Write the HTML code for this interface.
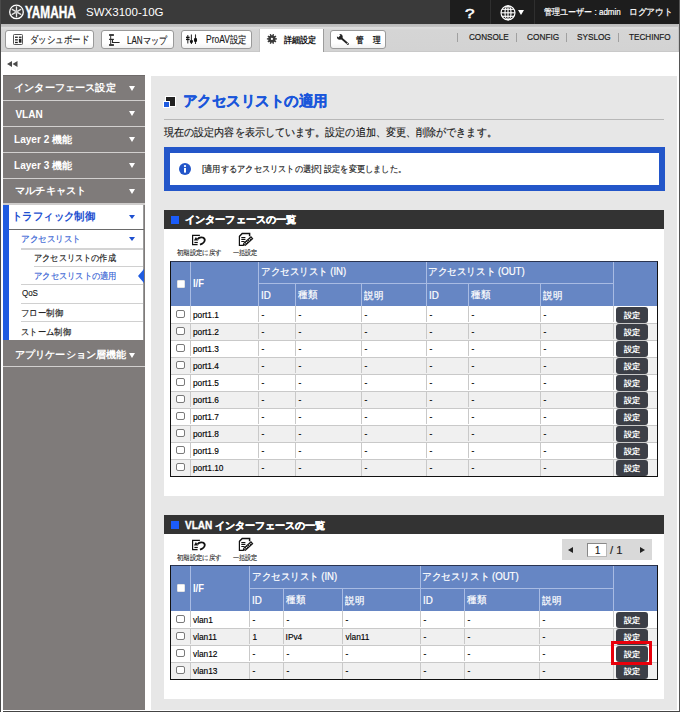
<!DOCTYPE html><html lang="ja"><head><meta charset="utf-8"><style>
*{margin:0;padding:0;box-sizing:border-box}
html,body{width:680px;height:712px;overflow:hidden;background:#fff;font-family:"Liberation Sans",sans-serif;color:#222}
.a{position:absolute}
.t{position:absolute;white-space:nowrap;line-height:1;transform-origin:0 0}
.tb{border:1px solid #9a9a9a;border-radius:3px;background:linear-gradient(#fff,#fff 70%,#f2f2f2)}
.sep{background:#d2d0cf}
.tri{width:0;height:0;border-left:3.2px solid transparent;border-right:3.2px solid transparent;border-top:5px solid #fff}
.btn{background:#3c3f47;border-radius:3px}
.cb{border:1px solid #7a7a7a;border-radius:2px;background:#fff}
</style></head><body><div class="a " style="left:0px;top:0px;width:680px;height:24px;background:#3a3a3a"></div>
<div class="a " style="left:450px;top:0px;width:230px;height:24px;background:#1d1d1d"></div>
<div class="a " style="left:490px;top:0px;width:1px;height:24px;background:#2f2f2f"></div>
<div class="a " style="left:534px;top:0px;width:1px;height:24px;background:#2f2f2f"></div>
<svg class="a" style="left:8px;top:4px" width="17" height="16" viewBox="0 0 17 16">
<circle cx="8.5" cy="7.9" r="6.8" fill="none" stroke="#fff" stroke-width="1.3"/>
<g stroke="#e6e6e6" stroke-width="1.3" stroke-linecap="round">
<line x1="8.5" y1="2.8" x2="8.5" y2="12.8"/>
<line x1="4.2" y1="5.4" x2="12.8" y2="10.4"/>
<line x1="12.8" y1="5.4" x2="4.2" y2="10.4"/>
</g><circle cx="8.5" cy="7.9" r="1.6" fill="#d0d0d0"/></svg>
<svg class="a" style="left:500px;top:5px" width="16" height="16" viewBox="0 0 16 16">
<g fill="none" stroke="#fff" stroke-width="1.15">
<circle cx="8" cy="7.8" r="7"/>
<ellipse cx="8" cy="7.8" rx="3" ry="7"/>
<line x1="8" y1="0.8" x2="8" y2="14.8"/>
<line x1="1" y1="7.8" x2="15" y2="7.8"/>
<line x1="2" y1="4.3" x2="14" y2="4.3"/>
<line x1="2" y1="11.3" x2="14" y2="11.3"/>
</g></svg>
<div class="a " style="left:518px;top:10px;width:0px;height:0px;border-left:3.3px solid transparent;border-right:3.3px solid transparent;border-top:5.3px solid #fff"></div>
<div class="a " style="left:0px;top:24px;width:680px;height:28px;background:linear-gradient(#b9b9b9 0px,#c6c6c6 3px,#dddddd 3px,#dcdcdc 4px,#d5d5d5 6px,#d3d3d3 27px,#c9c9c9 27px)"></div>
<div class="a tb" style="left:5px;top:30px;width:89px;height:19px;"></div>
<div class="a tb" style="left:101px;top:30px;width:73px;height:19px;"></div>
<div class="a tb" style="left:181px;top:30px;width:71px;height:19px;"></div>
<div class="a tb" style="left:330px;top:30px;width:56px;height:19px;"></div>
<div class="a " style="left:259px;top:29px;width:65px;height:23px;background:#fff;border-left:1px solid #c4c4c4;border-right:1px solid #9c9c9c"></div>
<svg class="a" style="left:13px;top:34px" width="10" height="11" viewBox="0 0 10 11">
<rect x="0.5" y="0.5" width="9" height="10" rx="0.8" fill="none" stroke="#555" stroke-width="1"/>
<g fill="#222"><rect x="2" y="2.6" width="2.8" height="1.3"/><rect x="2" y="5.2" width="2.8" height="1.3"/><rect x="2" y="7.8" width="2.8" height="1.3"/>
<rect x="5.9" y="2.6" width="2.6" height="1.3"/><rect x="5.9" y="4.8" width="2.6" height="3.9"/></g></svg>
<svg class="a" style="left:108px;top:33px" width="13" height="14" viewBox="0 0 13 14">
<g fill="#111"><rect x="1.1" y="1.2" width="4.8" height="1.6"/><rect x="1.1" y="5.8" width="4.8" height="1.1"/><rect x="1.1" y="11.2" width="4.8" height="1.6"/></g>
<path d="M2.7 2.5 V11.5" stroke="#333" stroke-width="1"/><path d="M4.5 6.6 V9.5 H11.6" stroke="#222" stroke-width="1.1" fill="none"/></svg>
<svg class="a" style="left:185px;top:33px" width="13" height="12" viewBox="0 0 13 12">
<g stroke="#333" stroke-width="1.1"><path d="M2.8 2 V10.5"/><path d="M6.4 1.4 V11"/><path d="M10.5 1.4 V11"/></g>
<g fill="#111"><rect x="1" y="3.7" width="3.6" height="1.4"/><rect x="1" y="5.8" width="3.6" height="1.3"/>
<path d="M4.9 7.3 H7.9 V9.3 L6.4 10.6 L4.9 9.3Z"/><ellipse cx="10.5" cy="7" rx="1.6" ry="2.3"/></g></svg>
<svg class="a" style="left:266px;top:33px" width="12" height="12" viewBox="0 0 12 12">
<g stroke="#3a3a3a" stroke-width="1.4"><line x1="5.9" y1="5.9" x2="10.90" y2="5.90"/><line x1="5.9" y1="5.9" x2="9.95" y2="8.84"/><line x1="5.9" y1="5.9" x2="7.45" y2="10.66"/><line x1="5.9" y1="5.9" x2="4.35" y2="10.66"/><line x1="5.9" y1="5.9" x2="1.85" y2="8.84"/><line x1="5.9" y1="5.9" x2="0.90" y2="5.90"/><line x1="5.9" y1="5.9" x2="1.85" y2="2.96"/><line x1="5.9" y1="5.9" x2="4.35" y2="1.14"/><line x1="5.9" y1="5.9" x2="7.45" y2="1.14"/><line x1="5.9" y1="5.9" x2="9.95" y2="2.96"/></g>
<circle cx="5.9" cy="5.9" r="3.6" fill="#3a3a3a"/><circle cx="5.9" cy="5.9" r="1.1" fill="#fff"/></svg>
<svg class="a" style="left:335px;top:32px" width="15" height="14" viewBox="0 0 15 14">
<line x1="5" y1="5" x2="13" y2="12" stroke="#222" stroke-width="1.8" stroke-linecap="round"/>
<circle cx="4.8" cy="4.8" r="2.9" fill="#222"/>
<path d="M1.2 3.5 L3.5 1.2 L5.4 3.3 L3.3 5.4Z" fill="#fff"/>
<circle cx="12.3" cy="11.3" r="0.6" fill="#fff"/></svg>
<div class="a " style="left:457px;top:33px;width:1px;height:9px;background:#a0a0a0"></div>
<div class="a " style="left:516px;top:33px;width:1px;height:9px;background:#a0a0a0"></div>
<div class="a " style="left:566px;top:33px;width:1px;height:9px;background:#a0a0a0"></div>
<div class="a " style="left:618px;top:33px;width:1px;height:9px;background:#a0a0a0"></div>
<svg class="a" style="left:7px;top:61px" width="11" height="6" viewBox="0 0 11 6">
<path d="M0 3 L5 0 L5 6Z M5.5 3 L10.5 0 L10.5 6Z" fill="#4a4a4a"/></svg>
<div class="a " style="left:3px;top:76px;width:142px;height:636px;background:#7f7b7a"></div>
<div class="a " style="left:3px;top:75px;width:142px;height:1px;background:#6e6a69"></div>
<div class="a tri" style="left:129px;top:86.3px;width:0px;height:0px;"></div>
<div class="a sep" style="left:3px;top:100px;width:142px;height:1px;"></div>
<div class="a tri" style="left:129px;top:111.3px;width:0px;height:0px;"></div>
<div class="a sep" style="left:3px;top:126px;width:142px;height:1px;"></div>
<div class="a tri" style="left:129px;top:137.3px;width:0px;height:0px;"></div>
<div class="a sep" style="left:3px;top:152px;width:142px;height:1px;"></div>
<div class="a tri" style="left:129px;top:163.3px;width:0px;height:0px;"></div>
<div class="a sep" style="left:3px;top:178px;width:142px;height:1px;"></div>
<div class="a tri" style="left:129px;top:189.3px;width:0px;height:0px;"></div>
<div class="a " style="left:3px;top:203px;width:142px;height:2px;background:#cfcdcc"></div>
<div class="a " style="left:3px;top:205px;width:141px;height:135px;background:#fff;border-right:1px solid #9a9a9a"></div>
<div class="a " style="left:3px;top:205px;width:6px;height:135px;background:#1f5be0"></div>
<div class="a " style="left:129px;top:215.2px;width:0px;height:0px;border-left:3.3px solid transparent;border-right:3.3px solid transparent;border-top:4.8px solid #1d4fd0"></div>
<div class="a " style="left:9px;top:229px;width:135px;height:1px;background:#6a6a6a"></div>
<div class="a " style="left:129px;top:237.3px;width:0px;height:0px;border-left:3.3px solid transparent;border-right:3.3px solid transparent;border-top:4.8px solid #1d4fd0"></div>
<div class="a " style="left:21px;top:248px;width:122px;height:2px;background:#d4d4d4"></div>
<div class="a " style="left:34px;top:266px;width:109px;height:1px;background:#d0d0d0"></div>
<div class="a " style="left:138px;top:269px;width:0px;height:0px;border-top:7.2px solid transparent;border-bottom:7.2px solid transparent;border-right:6.5px solid #1f5be0"></div>
<div class="a " style="left:21px;top:284px;width:122px;height:1px;background:#d0d0d0"></div>
<div class="a " style="left:21px;top:303px;width:122px;height:1px;background:#d0d0d0"></div>
<div class="a " style="left:21px;top:321px;width:122px;height:1px;background:#d0d0d0"></div>
<div class="a tri" style="left:129px;top:353px;width:0px;height:0px;"></div>
<div class="a sep" style="left:3px;top:366px;width:142px;height:1px;"></div>
<div class="a " style="left:151px;top:76px;width:526px;height:634px;background:#e7e7e7"></div>
<div class="a " style="left:166px;top:97px;width:8.5px;height:9px;background:#222;box-shadow:0 0 0 1px #fff"></div>
<div class="a " style="left:163px;top:101px;width:7px;height:7px;background:#1f5be0;border:1px solid #fff"></div>
<div class="a " style="left:164px;top:119px;width:500px;height:1px;background:#b8b8b8"></div>
<div class="a " style="left:164px;top:147px;width:501px;height:44px;background:#fff;border:6px solid #2356c9"></div>
<svg class="a" style="left:179px;top:163px" width="12" height="12" viewBox="0 0 12 12">
<circle cx="6" cy="6" r="6" fill="#2356c9"/><rect x="5" y="5" width="2" height="4.6" fill="#fff"/><circle cx="6" cy="3.1" r="1.15" fill="#fff"/></svg>
<div class="a " style="left:164px;top:210px;width:500px;height:286px;background:#fff"></div>
<div class="a " style="left:164px;top:210px;width:500px;height:19px;background:#333"></div>
<div class="a " style="left:170.5px;top:216px;width:8px;height:8px;background:#1b5cfa"></div>
<svg class="a" style="left:192px;top:234px" width="14" height="12" viewBox="0 0 14 12">
<path d="M7.9 1.3 H0.6 V10.6 H5.6" stroke="#111" stroke-width="1.2" fill="none"/>
<path d="M2.4 8.5 H5.8" stroke="#111" stroke-width="1.2"/>
<path d="M5.6 5.2 C7 3 11.6 2.6 12.6 5.2 C13.3 7.3 10.8 9.6 8 10.7" stroke="#111" stroke-width="1.9" fill="none"/>
<path d="M1.9 6.6 L3.9 3 L6.3 6.6Z" fill="#111"/></svg>
<svg class="a" style="left:238px;top:232px" width="16" height="15" viewBox="0 0 16 15">
<path d="M1.5 4.2 L4.2 1.5 H11.6 V4.2" stroke="#111" stroke-width="1.5" fill="none"/>
<path d="M1.4 4 V13.4 H5.6" stroke="#111" stroke-width="1.2" fill="none"/>
<path d="M3.3 5.6 H7.4 M3.3 7.5 H7.4 M3.3 9.5 H6.6" stroke="#111" stroke-width="1.2"/>
<path d="M6.2 12.6 L14.2 5.4" stroke="#111" stroke-width="3.6"/>
<path d="M6.6 12.2 L13.6 5.9" stroke="#fff" stroke-width="1.2" stroke-dasharray="1 1"/>
<path d="M4.6 13.9 L5.2 11.3 L7.3 13.3Z" fill="#111"/></svg>
<div class="a " style="left:170px;top:261px;width:488px;height:216px;border:1px solid #111;border-top-color:#2a3450;background:#fff"></div>
<div class="a " style="left:171px;top:262px;width:486px;height:44px;background:#6686c4"></div>
<div class="a " style="left:190px;top:262px;width:1px;height:44px;background:#a8bbe3"></div>
<div class="a " style="left:258px;top:262px;width:1px;height:44px;background:#a8bbe3"></div>
<div class="a " style="left:426px;top:262px;width:1px;height:44px;background:#a8bbe3"></div>
<div class="a " style="left:613px;top:262px;width:1px;height:44px;background:#a8bbe3"></div>
<div class="a " style="left:295px;top:284px;width:1px;height:22px;background:#a8bbe3"></div>
<div class="a " style="left:361px;top:284px;width:1px;height:22px;background:#a8bbe3"></div>
<div class="a " style="left:468px;top:284px;width:1px;height:22px;background:#a8bbe3"></div>
<div class="a " style="left:540px;top:284px;width:1px;height:22px;background:#a8bbe3"></div>
<div class="a " style="left:258px;top:283px;width:355px;height:1px;background:#a8bbe3"></div>
<div class="a " style="left:176.5px;top:279.5px;width:8px;height:8px;background:#fff;border:1px solid #e4e4e4;border-radius:1px"></div>
<div class="a " style="left:171px;top:306px;width:486px;height:17px;background:#fff"></div>
<div class="a " style="left:190px;top:306px;width:1px;height:16px;background:#c9c9c9"></div>
<div class="a " style="left:258px;top:306px;width:1px;height:16px;background:#c9c9c9"></div>
<div class="a " style="left:295px;top:306px;width:1px;height:16px;background:#c9c9c9"></div>
<div class="a " style="left:361px;top:306px;width:1px;height:16px;background:#c9c9c9"></div>
<div class="a " style="left:426px;top:306px;width:1px;height:16px;background:#c9c9c9"></div>
<div class="a " style="left:468px;top:306px;width:1px;height:16px;background:#c9c9c9"></div>
<div class="a " style="left:540px;top:306px;width:1px;height:16px;background:#c9c9c9"></div>
<div class="a " style="left:613px;top:306px;width:1px;height:16px;background:#c9c9c9"></div>
<div class="a cb" style="left:176px;top:309.5px;width:9px;height:8.5px;"></div>
<div class="a btn" style="left:616px;top:307px;width:31.5px;height:15.5px;"></div>
<div class="a " style="left:171px;top:323px;width:486px;height:17px;background:#f0f0f0"></div>
<div class="a " style="left:171px;top:323px;width:486px;height:1px;background:#c9c9c9"></div>
<div class="a " style="left:190px;top:323px;width:1px;height:16px;background:#c9c9c9"></div>
<div class="a " style="left:258px;top:323px;width:1px;height:16px;background:#c9c9c9"></div>
<div class="a " style="left:295px;top:323px;width:1px;height:16px;background:#c9c9c9"></div>
<div class="a " style="left:361px;top:323px;width:1px;height:16px;background:#c9c9c9"></div>
<div class="a " style="left:426px;top:323px;width:1px;height:16px;background:#c9c9c9"></div>
<div class="a " style="left:468px;top:323px;width:1px;height:16px;background:#c9c9c9"></div>
<div class="a " style="left:540px;top:323px;width:1px;height:16px;background:#c9c9c9"></div>
<div class="a " style="left:613px;top:323px;width:1px;height:16px;background:#c9c9c9"></div>
<div class="a cb" style="left:176px;top:326.5px;width:9px;height:8.5px;"></div>
<div class="a btn" style="left:616px;top:324px;width:31.5px;height:15.5px;"></div>
<div class="a " style="left:171px;top:340px;width:486px;height:17px;background:#fff"></div>
<div class="a " style="left:171px;top:340px;width:486px;height:1px;background:#c9c9c9"></div>
<div class="a " style="left:190px;top:340px;width:1px;height:16px;background:#c9c9c9"></div>
<div class="a " style="left:258px;top:340px;width:1px;height:16px;background:#c9c9c9"></div>
<div class="a " style="left:295px;top:340px;width:1px;height:16px;background:#c9c9c9"></div>
<div class="a " style="left:361px;top:340px;width:1px;height:16px;background:#c9c9c9"></div>
<div class="a " style="left:426px;top:340px;width:1px;height:16px;background:#c9c9c9"></div>
<div class="a " style="left:468px;top:340px;width:1px;height:16px;background:#c9c9c9"></div>
<div class="a " style="left:540px;top:340px;width:1px;height:16px;background:#c9c9c9"></div>
<div class="a " style="left:613px;top:340px;width:1px;height:16px;background:#c9c9c9"></div>
<div class="a cb" style="left:176px;top:343.5px;width:9px;height:8.5px;"></div>
<div class="a btn" style="left:616px;top:341px;width:31.5px;height:15.5px;"></div>
<div class="a " style="left:171px;top:357px;width:486px;height:17px;background:#f0f0f0"></div>
<div class="a " style="left:171px;top:357px;width:486px;height:1px;background:#c9c9c9"></div>
<div class="a " style="left:190px;top:357px;width:1px;height:16px;background:#c9c9c9"></div>
<div class="a " style="left:258px;top:357px;width:1px;height:16px;background:#c9c9c9"></div>
<div class="a " style="left:295px;top:357px;width:1px;height:16px;background:#c9c9c9"></div>
<div class="a " style="left:361px;top:357px;width:1px;height:16px;background:#c9c9c9"></div>
<div class="a " style="left:426px;top:357px;width:1px;height:16px;background:#c9c9c9"></div>
<div class="a " style="left:468px;top:357px;width:1px;height:16px;background:#c9c9c9"></div>
<div class="a " style="left:540px;top:357px;width:1px;height:16px;background:#c9c9c9"></div>
<div class="a " style="left:613px;top:357px;width:1px;height:16px;background:#c9c9c9"></div>
<div class="a cb" style="left:176px;top:360.5px;width:9px;height:8.5px;"></div>
<div class="a btn" style="left:616px;top:358px;width:31.5px;height:15.5px;"></div>
<div class="a " style="left:171px;top:374px;width:486px;height:17px;background:#fff"></div>
<div class="a " style="left:171px;top:374px;width:486px;height:1px;background:#c9c9c9"></div>
<div class="a " style="left:190px;top:374px;width:1px;height:16px;background:#c9c9c9"></div>
<div class="a " style="left:258px;top:374px;width:1px;height:16px;background:#c9c9c9"></div>
<div class="a " style="left:295px;top:374px;width:1px;height:16px;background:#c9c9c9"></div>
<div class="a " style="left:361px;top:374px;width:1px;height:16px;background:#c9c9c9"></div>
<div class="a " style="left:426px;top:374px;width:1px;height:16px;background:#c9c9c9"></div>
<div class="a " style="left:468px;top:374px;width:1px;height:16px;background:#c9c9c9"></div>
<div class="a " style="left:540px;top:374px;width:1px;height:16px;background:#c9c9c9"></div>
<div class="a " style="left:613px;top:374px;width:1px;height:16px;background:#c9c9c9"></div>
<div class="a cb" style="left:176px;top:377.5px;width:9px;height:8.5px;"></div>
<div class="a btn" style="left:616px;top:375px;width:31.5px;height:15.5px;"></div>
<div class="a " style="left:171px;top:391px;width:486px;height:17px;background:#f0f0f0"></div>
<div class="a " style="left:171px;top:391px;width:486px;height:1px;background:#c9c9c9"></div>
<div class="a " style="left:190px;top:391px;width:1px;height:16px;background:#c9c9c9"></div>
<div class="a " style="left:258px;top:391px;width:1px;height:16px;background:#c9c9c9"></div>
<div class="a " style="left:295px;top:391px;width:1px;height:16px;background:#c9c9c9"></div>
<div class="a " style="left:361px;top:391px;width:1px;height:16px;background:#c9c9c9"></div>
<div class="a " style="left:426px;top:391px;width:1px;height:16px;background:#c9c9c9"></div>
<div class="a " style="left:468px;top:391px;width:1px;height:16px;background:#c9c9c9"></div>
<div class="a " style="left:540px;top:391px;width:1px;height:16px;background:#c9c9c9"></div>
<div class="a " style="left:613px;top:391px;width:1px;height:16px;background:#c9c9c9"></div>
<div class="a cb" style="left:176px;top:394.5px;width:9px;height:8.5px;"></div>
<div class="a btn" style="left:616px;top:392px;width:31.5px;height:15.5px;"></div>
<div class="a " style="left:171px;top:408px;width:486px;height:17px;background:#fff"></div>
<div class="a " style="left:171px;top:408px;width:486px;height:1px;background:#c9c9c9"></div>
<div class="a " style="left:190px;top:408px;width:1px;height:16px;background:#c9c9c9"></div>
<div class="a " style="left:258px;top:408px;width:1px;height:16px;background:#c9c9c9"></div>
<div class="a " style="left:295px;top:408px;width:1px;height:16px;background:#c9c9c9"></div>
<div class="a " style="left:361px;top:408px;width:1px;height:16px;background:#c9c9c9"></div>
<div class="a " style="left:426px;top:408px;width:1px;height:16px;background:#c9c9c9"></div>
<div class="a " style="left:468px;top:408px;width:1px;height:16px;background:#c9c9c9"></div>
<div class="a " style="left:540px;top:408px;width:1px;height:16px;background:#c9c9c9"></div>
<div class="a " style="left:613px;top:408px;width:1px;height:16px;background:#c9c9c9"></div>
<div class="a cb" style="left:176px;top:411.5px;width:9px;height:8.5px;"></div>
<div class="a btn" style="left:616px;top:409px;width:31.5px;height:15.5px;"></div>
<div class="a " style="left:171px;top:425px;width:486px;height:17px;background:#f0f0f0"></div>
<div class="a " style="left:171px;top:425px;width:486px;height:1px;background:#c9c9c9"></div>
<div class="a " style="left:190px;top:425px;width:1px;height:16px;background:#c9c9c9"></div>
<div class="a " style="left:258px;top:425px;width:1px;height:16px;background:#c9c9c9"></div>
<div class="a " style="left:295px;top:425px;width:1px;height:16px;background:#c9c9c9"></div>
<div class="a " style="left:361px;top:425px;width:1px;height:16px;background:#c9c9c9"></div>
<div class="a " style="left:426px;top:425px;width:1px;height:16px;background:#c9c9c9"></div>
<div class="a " style="left:468px;top:425px;width:1px;height:16px;background:#c9c9c9"></div>
<div class="a " style="left:540px;top:425px;width:1px;height:16px;background:#c9c9c9"></div>
<div class="a " style="left:613px;top:425px;width:1px;height:16px;background:#c9c9c9"></div>
<div class="a cb" style="left:176px;top:428.5px;width:9px;height:8.5px;"></div>
<div class="a btn" style="left:616px;top:426px;width:31.5px;height:15.5px;"></div>
<div class="a " style="left:171px;top:442px;width:486px;height:17px;background:#fff"></div>
<div class="a " style="left:171px;top:442px;width:486px;height:1px;background:#c9c9c9"></div>
<div class="a " style="left:190px;top:442px;width:1px;height:16px;background:#c9c9c9"></div>
<div class="a " style="left:258px;top:442px;width:1px;height:16px;background:#c9c9c9"></div>
<div class="a " style="left:295px;top:442px;width:1px;height:16px;background:#c9c9c9"></div>
<div class="a " style="left:361px;top:442px;width:1px;height:16px;background:#c9c9c9"></div>
<div class="a " style="left:426px;top:442px;width:1px;height:16px;background:#c9c9c9"></div>
<div class="a " style="left:468px;top:442px;width:1px;height:16px;background:#c9c9c9"></div>
<div class="a " style="left:540px;top:442px;width:1px;height:16px;background:#c9c9c9"></div>
<div class="a " style="left:613px;top:442px;width:1px;height:16px;background:#c9c9c9"></div>
<div class="a cb" style="left:176px;top:445.5px;width:9px;height:8.5px;"></div>
<div class="a btn" style="left:616px;top:443px;width:31.5px;height:15.5px;"></div>
<div class="a " style="left:171px;top:459px;width:486px;height:17px;background:#f0f0f0"></div>
<div class="a " style="left:171px;top:459px;width:486px;height:1px;background:#c9c9c9"></div>
<div class="a " style="left:190px;top:459px;width:1px;height:17px;background:#c9c9c9"></div>
<div class="a " style="left:258px;top:459px;width:1px;height:17px;background:#c9c9c9"></div>
<div class="a " style="left:295px;top:459px;width:1px;height:17px;background:#c9c9c9"></div>
<div class="a " style="left:361px;top:459px;width:1px;height:17px;background:#c9c9c9"></div>
<div class="a " style="left:426px;top:459px;width:1px;height:17px;background:#c9c9c9"></div>
<div class="a " style="left:468px;top:459px;width:1px;height:17px;background:#c9c9c9"></div>
<div class="a " style="left:540px;top:459px;width:1px;height:17px;background:#c9c9c9"></div>
<div class="a " style="left:613px;top:459px;width:1px;height:17px;background:#c9c9c9"></div>
<div class="a cb" style="left:176px;top:462.5px;width:9px;height:8.5px;"></div>
<div class="a btn" style="left:616px;top:460px;width:31.5px;height:15.5px;"></div>
<div class="a " style="left:164px;top:515px;width:500px;height:184px;background:#fff"></div>
<div class="a " style="left:164px;top:515px;width:500px;height:19px;background:#333"></div>
<div class="a " style="left:170.5px;top:521px;width:8px;height:8px;background:#1b5cfa"></div>
<svg class="a" style="left:192px;top:539px" width="14" height="12" viewBox="0 0 14 12">
<path d="M7.9 1.3 H0.6 V10.6 H5.6" stroke="#111" stroke-width="1.2" fill="none"/>
<path d="M2.4 8.5 H5.8" stroke="#111" stroke-width="1.2"/>
<path d="M5.6 5.2 C7 3 11.6 2.6 12.6 5.2 C13.3 7.3 10.8 9.6 8 10.7" stroke="#111" stroke-width="1.9" fill="none"/>
<path d="M1.9 6.6 L3.9 3 L6.3 6.6Z" fill="#111"/></svg>
<svg class="a" style="left:238px;top:537px" width="16" height="15" viewBox="0 0 16 15">
<path d="M1.5 4.2 L4.2 1.5 H11.6 V4.2" stroke="#111" stroke-width="1.5" fill="none"/>
<path d="M1.4 4 V13.4 H5.6" stroke="#111" stroke-width="1.2" fill="none"/>
<path d="M3.3 5.6 H7.4 M3.3 7.5 H7.4 M3.3 9.5 H6.6" stroke="#111" stroke-width="1.2"/>
<path d="M6.2 12.6 L14.2 5.4" stroke="#111" stroke-width="3.6"/>
<path d="M6.6 12.2 L13.6 5.9" stroke="#fff" stroke-width="1.2" stroke-dasharray="1 1"/>
<path d="M4.6 13.9 L5.2 11.3 L7.3 13.3Z" fill="#111"/></svg>
<div class="a " style="left:170px;top:565px;width:488px;height:115px;border:1px solid #111;border-top-color:#2a3450;background:#fff"></div>
<div class="a " style="left:171px;top:566px;width:486px;height:45px;background:#6686c4"></div>
<div class="a " style="left:190px;top:566px;width:1px;height:45px;background:#a8bbe3"></div>
<div class="a " style="left:249px;top:566px;width:1px;height:45px;background:#a8bbe3"></div>
<div class="a " style="left:420px;top:566px;width:1px;height:45px;background:#a8bbe3"></div>
<div class="a " style="left:613px;top:566px;width:1px;height:45px;background:#a8bbe3"></div>
<div class="a " style="left:283px;top:589px;width:1px;height:22px;background:#a8bbe3"></div>
<div class="a " style="left:342px;top:589px;width:1px;height:22px;background:#a8bbe3"></div>
<div class="a " style="left:464px;top:589px;width:1px;height:22px;background:#a8bbe3"></div>
<div class="a " style="left:539px;top:589px;width:1px;height:22px;background:#a8bbe3"></div>
<div class="a " style="left:249px;top:588px;width:364px;height:1px;background:#a8bbe3"></div>
<div class="a " style="left:176.5px;top:584.0px;width:8px;height:8px;background:#fff;border:1px solid #e4e4e4;border-radius:1px"></div>
<div class="a " style="left:171px;top:611px;width:486px;height:17px;background:#fff"></div>
<div class="a " style="left:190px;top:611px;width:1px;height:16px;background:#c9c9c9"></div>
<div class="a " style="left:249px;top:611px;width:1px;height:16px;background:#c9c9c9"></div>
<div class="a " style="left:283px;top:611px;width:1px;height:16px;background:#c9c9c9"></div>
<div class="a " style="left:342px;top:611px;width:1px;height:16px;background:#c9c9c9"></div>
<div class="a " style="left:420px;top:611px;width:1px;height:16px;background:#c9c9c9"></div>
<div class="a " style="left:464px;top:611px;width:1px;height:16px;background:#c9c9c9"></div>
<div class="a " style="left:539px;top:611px;width:1px;height:16px;background:#c9c9c9"></div>
<div class="a " style="left:613px;top:611px;width:1px;height:16px;background:#c9c9c9"></div>
<div class="a cb" style="left:176px;top:614.5px;width:9px;height:8.5px;"></div>
<div class="a btn" style="left:616px;top:612px;width:31.5px;height:15.5px;"></div>
<div class="a " style="left:171px;top:628px;width:486px;height:17px;background:#f0f0f0"></div>
<div class="a " style="left:171px;top:628px;width:486px;height:1px;background:#c9c9c9"></div>
<div class="a " style="left:190px;top:628px;width:1px;height:16px;background:#c9c9c9"></div>
<div class="a " style="left:249px;top:628px;width:1px;height:16px;background:#c9c9c9"></div>
<div class="a " style="left:283px;top:628px;width:1px;height:16px;background:#c9c9c9"></div>
<div class="a " style="left:342px;top:628px;width:1px;height:16px;background:#c9c9c9"></div>
<div class="a " style="left:420px;top:628px;width:1px;height:16px;background:#c9c9c9"></div>
<div class="a " style="left:464px;top:628px;width:1px;height:16px;background:#c9c9c9"></div>
<div class="a " style="left:539px;top:628px;width:1px;height:16px;background:#c9c9c9"></div>
<div class="a " style="left:613px;top:628px;width:1px;height:16px;background:#c9c9c9"></div>
<div class="a cb" style="left:176px;top:631.5px;width:9px;height:8.5px;"></div>
<div class="a btn" style="left:616px;top:629px;width:31.5px;height:15.5px;"></div>
<div class="a " style="left:171px;top:645px;width:486px;height:17px;background:#fff"></div>
<div class="a " style="left:171px;top:645px;width:486px;height:1px;background:#c9c9c9"></div>
<div class="a " style="left:190px;top:645px;width:1px;height:16px;background:#c9c9c9"></div>
<div class="a " style="left:249px;top:645px;width:1px;height:16px;background:#c9c9c9"></div>
<div class="a " style="left:283px;top:645px;width:1px;height:16px;background:#c9c9c9"></div>
<div class="a " style="left:342px;top:645px;width:1px;height:16px;background:#c9c9c9"></div>
<div class="a " style="left:420px;top:645px;width:1px;height:16px;background:#c9c9c9"></div>
<div class="a " style="left:464px;top:645px;width:1px;height:16px;background:#c9c9c9"></div>
<div class="a " style="left:539px;top:645px;width:1px;height:16px;background:#c9c9c9"></div>
<div class="a " style="left:613px;top:645px;width:1px;height:16px;background:#c9c9c9"></div>
<div class="a cb" style="left:176px;top:648.5px;width:9px;height:8.5px;"></div>
<div class="a btn" style="left:616px;top:646px;width:31.5px;height:15.5px;"></div>
<div class="a " style="left:171px;top:662px;width:486px;height:17px;background:#f0f0f0"></div>
<div class="a " style="left:171px;top:662px;width:486px;height:1px;background:#c9c9c9"></div>
<div class="a " style="left:190px;top:662px;width:1px;height:17px;background:#c9c9c9"></div>
<div class="a " style="left:249px;top:662px;width:1px;height:17px;background:#c9c9c9"></div>
<div class="a " style="left:283px;top:662px;width:1px;height:17px;background:#c9c9c9"></div>
<div class="a " style="left:342px;top:662px;width:1px;height:17px;background:#c9c9c9"></div>
<div class="a " style="left:420px;top:662px;width:1px;height:17px;background:#c9c9c9"></div>
<div class="a " style="left:464px;top:662px;width:1px;height:17px;background:#c9c9c9"></div>
<div class="a " style="left:539px;top:662px;width:1px;height:17px;background:#c9c9c9"></div>
<div class="a " style="left:613px;top:662px;width:1px;height:17px;background:#c9c9c9"></div>
<div class="a cb" style="left:176px;top:665.5px;width:9px;height:8.5px;"></div>
<div class="a btn" style="left:616px;top:663px;width:31.5px;height:15.5px;"></div>
<div class="a " style="left:562px;top:539px;width:90px;height:21px;background:#d9d9d9"></div>
<div class="a " style="left:568px;top:546.5px;width:0px;height:0px;border-top:3.5px solid transparent;border-bottom:3.5px solid transparent;border-right:5.3px solid #222"></div>
<div class="a " style="left:587px;top:543px;width:20px;height:14px;background:#fff;border:1px solid #b8b8b8;border-top-color:#888;border-left-color:#888"></div>
<div class="a " style="left:640px;top:546.5px;width:0px;height:0px;border-top:3.5px solid transparent;border-bottom:3.5px solid transparent;border-left:5.3px solid #222"></div>
<div class="t" style="left:24.88px;top:3.90px;font-size:16.50px;font-weight:bold;color:#fff;transform:scaleX(0.7159);-webkit-text-stroke:0.45px #fff;">YAMAHA</div>
<div class="t" style="left:86.27px;top:6.90px;font-size:11.20px;font-weight:normal;color:#fff;transform:scaleX(1.0311);">SWX3100-10G</div>
<div class="t" style="left:464.93px;top:6.70px;font-size:13.50px;font-weight:normal;color:#fff;transform:scaleX(1.2667);-webkit-text-stroke:0.5px #fff;">?</div>
<div class="t" style="left:543.50px;top:8.25px;font-size:9.00px;font-weight:normal;color:#fff;transform:scaleX(0.8930);-webkit-text-stroke:0.2px currentColor;">管理ユーザー : admin</div>
<div class="t" style="left:629.04px;top:7.50px;font-size:9.00px;font-weight:normal;color:#fff;transform:scaleX(0.9619);-webkit-text-stroke:0.2px currentColor;">ログアウト</div>
<div class="t" style="left:30.06px;top:35.15px;font-size:10.00px;font-weight:normal;color:#1a1a1a;transform:scaleX(0.8426);-webkit-text-stroke:0.15px currentColor;">ダッシュボード</div>
<div class="t" style="left:126.80px;top:35.85px;font-size:10.00px;font-weight:normal;color:#1a1a1a;transform:scaleX(0.8020);-webkit-text-stroke:0.15px currentColor;">LANマップ</div>
<div class="t" style="left:205.96px;top:34.85px;font-size:10.00px;font-weight:normal;color:#1a1a1a;transform:scaleX(0.8435);-webkit-text-stroke:0.15px currentColor;">ProAV設定</div>
<div class="t" style="left:284.40px;top:36.30px;font-size:9.00px;font-weight:bold;color:#111;transform:scaleX(0.9000);">詳細設定</div>
<div class="t" style="left:356.20px;top:35.80px;font-size:9.00px;font-weight:bold;color:#222;transform:scaleX(0.8444);">管</div>
<div class="t" style="left:372.60px;top:35.80px;font-size:9.00px;font-weight:bold;color:#222;transform:scaleX(0.8556);">理</div>
<div class="t" style="left:468.50px;top:31.60px;font-size:9.80px;font-weight:normal;color:#1a1a1a;transform:scaleX(0.8292);-webkit-text-stroke:0.2px currentColor;">CONSOLE</div>
<div class="t" style="left:526.50px;top:31.60px;font-size:9.80px;font-weight:normal;color:#1a1a1a;transform:scaleX(0.8447);-webkit-text-stroke:0.2px currentColor;">CONFIG</div>
<div class="t" style="left:576.80px;top:31.60px;font-size:9.80px;font-weight:normal;color:#1a1a1a;transform:scaleX(0.8375);-webkit-text-stroke:0.2px currentColor;">SYSLOG</div>
<div class="t" style="left:628.80px;top:31.60px;font-size:9.80px;font-weight:normal;color:#1a1a1a;transform:scaleX(0.8300);-webkit-text-stroke:0.2px currentColor;">TECHINFO</div>
<div class="t" style="left:13.98px;top:83.15px;font-size:10.00px;font-weight:bold;color:#fff;transform:scaleX(1.0182);">インターフェース設定</div>
<div class="t" style="left:15.40px;top:109.50px;font-size:10.00px;font-weight:bold;color:#fff;">VLAN</div>
<div class="t" style="left:14.39px;top:135.35px;font-size:10.00px;font-weight:bold;color:#fff;transform:scaleX(1.0070);">Layer 2 機能</div>
<div class="t" style="left:14.39px;top:161.35px;font-size:10.00px;font-weight:bold;color:#fff;transform:scaleX(1.0070);">Layer 3 機能</div>
<div class="t" style="left:15.40px;top:186.10px;font-size:10.00px;font-weight:bold;color:#fff;transform:scaleX(1.0221);">マルチキャスト</div>
<div class="t" style="left:12.12px;top:211.25px;font-size:10.50px;font-weight:bold;color:#1d4fd0;transform:scaleX(0.9452);">トラフィック制御</div>
<div class="t" style="left:21.05px;top:234.65px;font-size:9.00px;font-weight:normal;color:#3562d4;transform:scaleX(0.9500);-webkit-text-stroke:0.15px currentColor;">アクセスリスト</div>
<div class="t" style="left:33.99px;top:254.40px;font-size:9.00px;font-weight:normal;color:#1a1a1a;transform:scaleX(0.9090);-webkit-text-stroke:0.15px currentColor;">アクセスリストの作成</div>
<div class="t" style="left:33.98px;top:272.05px;font-size:9.00px;font-weight:normal;color:#3562d4;transform:scaleX(0.9193);-webkit-text-stroke:0.15px currentColor;">アクセスリストの適用</div>
<div class="t" style="left:22.00px;top:288.10px;font-size:9.50px;font-weight:normal;color:#1a1a1a;transform:scaleX(0.8368);-webkit-text-stroke:0.15px currentColor;">QoS</div>
<div class="t" style="left:21.06px;top:308.85px;font-size:9.00px;font-weight:normal;color:#1a1a1a;transform:scaleX(0.9386);-webkit-text-stroke:0.15px currentColor;">フロー制御</div>
<div class="t" style="left:21.08px;top:327.60px;font-size:9.00px;font-weight:normal;color:#1a1a1a;transform:scaleX(0.9245);-webkit-text-stroke:0.15px currentColor;">ストーム制御</div>
<div class="t" style="left:14.89px;top:350.10px;font-size:10.00px;font-weight:bold;color:#fff;transform:scaleX(1.0119);">アプリケーション層機能</div>
<div class="t" style="left:182.83px;top:93.90px;font-size:14.50px;font-weight:bold;color:#1a56db;transform:scaleX(0.9655);-webkit-text-stroke:0.35px currentColor;">アクセスリストの適用</div>
<div class="t" style="left:164.00px;top:127.30px;font-size:10.50px;font-weight:normal;color:#1a1a1a;transform:scaleX(0.9166);-webkit-text-stroke:0.15px currentColor;">現在の設定内容を表示しています。設定の追加、変更、削除ができます。</div>
<div class="t" style="left:201.50px;top:165.35px;font-size:9.00px;font-weight:normal;color:#1a1a1a;transform:scaleX(0.9128);-webkit-text-stroke:0.15px currentColor;">[適用するアクセスリストの選択] 設定を変更しました。</div>
<div class="t" style="left:184.70px;top:215.35px;font-size:10.00px;font-weight:bold;color:#fff;transform:scaleX(1.0118);-webkit-text-stroke:0.3px currentColor;">インターフェースの一覧</div>
<div class="t" style="left:176.50px;top:248.80px;font-size:7.00px;font-weight:normal;color:#333;transform:scaleX(0.9062);-webkit-text-stroke:0.15px currentColor;">初期設定に戻す</div>
<div class="t" style="left:233.00px;top:248.80px;font-size:7.00px;font-weight:normal;color:#333;transform:scaleX(0.8786);-webkit-text-stroke:0.15px currentColor;">一括設定</div>
<div class="t" style="left:192.56px;top:279.20px;font-size:10.00px;font-weight:bold;color:#fff;transform:scaleX(0.9364);">I/F</div>
<div class="t" style="left:260.65px;top:267.45px;font-size:10.00px;font-weight:normal;color:#fff;transform:scaleX(0.9523);-webkit-text-stroke:0.2px currentColor;">アクセスリスト (IN)</div>
<div class="t" style="left:427.84px;top:267.45px;font-size:10.00px;font-weight:normal;color:#fff;transform:scaleX(0.9616);-webkit-text-stroke:0.2px currentColor;">アクセスリスト (OUT)</div>
<div class="t" style="left:260.62px;top:290.70px;font-size:10.00px;font-weight:normal;color:#fff;transform:scaleX(0.9778);-webkit-text-stroke:0.2px currentColor;">ID</div>
<div class="t" style="left:298.40px;top:290.05px;font-size:9.80px;font-weight:normal;color:#fff;transform:scaleX(0.9550);-webkit-text-stroke:0.2px currentColor;">種類</div>
<div class="t" style="left:364.10px;top:290.55px;font-size:9.80px;font-weight:normal;color:#fff;transform:scaleX(0.9526);-webkit-text-stroke:0.2px currentColor;">説明</div>
<div class="t" style="left:428.62px;top:290.70px;font-size:10.00px;font-weight:normal;color:#fff;transform:scaleX(0.9778);-webkit-text-stroke:0.2px currentColor;">ID</div>
<div class="t" style="left:471.40px;top:290.05px;font-size:9.80px;font-weight:normal;color:#fff;transform:scaleX(0.9550);-webkit-text-stroke:0.2px currentColor;">種類</div>
<div class="t" style="left:543.10px;top:290.55px;font-size:9.80px;font-weight:normal;color:#fff;transform:scaleX(0.9526);-webkit-text-stroke:0.2px currentColor;">説明</div>
<div class="t" style="left:193.00px;top:310.90px;font-size:8.30px;font-weight:normal;color:#000;-webkit-text-stroke:0.15px currentColor;">port1.1</div>
<div class="t" style="left:261.60px;top:310.90px;font-size:8.30px;font-weight:normal;color:#000;-webkit-text-stroke:0.15px currentColor;">-</div>
<div class="t" style="left:298.60px;top:310.90px;font-size:8.30px;font-weight:normal;color:#000;-webkit-text-stroke:0.15px currentColor;">-</div>
<div class="t" style="left:364.60px;top:310.90px;font-size:8.30px;font-weight:normal;color:#000;-webkit-text-stroke:0.15px currentColor;">-</div>
<div class="t" style="left:429.60px;top:310.90px;font-size:8.30px;font-weight:normal;color:#000;-webkit-text-stroke:0.15px currentColor;">-</div>
<div class="t" style="left:471.60px;top:310.90px;font-size:8.30px;font-weight:normal;color:#000;-webkit-text-stroke:0.15px currentColor;">-</div>
<div class="t" style="left:543.60px;top:310.90px;font-size:8.30px;font-weight:normal;color:#000;-webkit-text-stroke:0.15px currentColor;">-</div>
<div class="t" style="left:623.50px;top:311.50px;font-size:8.00px;font-weight:bold;color:#fff;transform:scaleX(1.0312);">設定</div>
<div class="t" style="left:193.00px;top:327.90px;font-size:8.30px;font-weight:normal;color:#000;-webkit-text-stroke:0.15px currentColor;">port1.2</div>
<div class="t" style="left:261.60px;top:327.90px;font-size:8.30px;font-weight:normal;color:#000;-webkit-text-stroke:0.15px currentColor;">-</div>
<div class="t" style="left:298.60px;top:327.90px;font-size:8.30px;font-weight:normal;color:#000;-webkit-text-stroke:0.15px currentColor;">-</div>
<div class="t" style="left:364.60px;top:327.90px;font-size:8.30px;font-weight:normal;color:#000;-webkit-text-stroke:0.15px currentColor;">-</div>
<div class="t" style="left:429.60px;top:327.90px;font-size:8.30px;font-weight:normal;color:#000;-webkit-text-stroke:0.15px currentColor;">-</div>
<div class="t" style="left:471.60px;top:327.90px;font-size:8.30px;font-weight:normal;color:#000;-webkit-text-stroke:0.15px currentColor;">-</div>
<div class="t" style="left:543.60px;top:327.90px;font-size:8.30px;font-weight:normal;color:#000;-webkit-text-stroke:0.15px currentColor;">-</div>
<div class="t" style="left:623.50px;top:328.50px;font-size:8.00px;font-weight:bold;color:#fff;transform:scaleX(1.0312);">設定</div>
<div class="t" style="left:193.00px;top:344.90px;font-size:8.30px;font-weight:normal;color:#000;-webkit-text-stroke:0.15px currentColor;">port1.3</div>
<div class="t" style="left:261.60px;top:344.90px;font-size:8.30px;font-weight:normal;color:#000;-webkit-text-stroke:0.15px currentColor;">-</div>
<div class="t" style="left:298.60px;top:344.90px;font-size:8.30px;font-weight:normal;color:#000;-webkit-text-stroke:0.15px currentColor;">-</div>
<div class="t" style="left:364.60px;top:344.90px;font-size:8.30px;font-weight:normal;color:#000;-webkit-text-stroke:0.15px currentColor;">-</div>
<div class="t" style="left:429.60px;top:344.90px;font-size:8.30px;font-weight:normal;color:#000;-webkit-text-stroke:0.15px currentColor;">-</div>
<div class="t" style="left:471.60px;top:344.90px;font-size:8.30px;font-weight:normal;color:#000;-webkit-text-stroke:0.15px currentColor;">-</div>
<div class="t" style="left:543.60px;top:344.90px;font-size:8.30px;font-weight:normal;color:#000;-webkit-text-stroke:0.15px currentColor;">-</div>
<div class="t" style="left:623.50px;top:345.50px;font-size:8.00px;font-weight:bold;color:#fff;transform:scaleX(1.0312);">設定</div>
<div class="t" style="left:193.00px;top:361.90px;font-size:8.30px;font-weight:normal;color:#000;-webkit-text-stroke:0.15px currentColor;">port1.4</div>
<div class="t" style="left:261.60px;top:361.90px;font-size:8.30px;font-weight:normal;color:#000;-webkit-text-stroke:0.15px currentColor;">-</div>
<div class="t" style="left:298.60px;top:361.90px;font-size:8.30px;font-weight:normal;color:#000;-webkit-text-stroke:0.15px currentColor;">-</div>
<div class="t" style="left:364.60px;top:361.90px;font-size:8.30px;font-weight:normal;color:#000;-webkit-text-stroke:0.15px currentColor;">-</div>
<div class="t" style="left:429.60px;top:361.90px;font-size:8.30px;font-weight:normal;color:#000;-webkit-text-stroke:0.15px currentColor;">-</div>
<div class="t" style="left:471.60px;top:361.90px;font-size:8.30px;font-weight:normal;color:#000;-webkit-text-stroke:0.15px currentColor;">-</div>
<div class="t" style="left:543.60px;top:361.90px;font-size:8.30px;font-weight:normal;color:#000;-webkit-text-stroke:0.15px currentColor;">-</div>
<div class="t" style="left:623.50px;top:362.50px;font-size:8.00px;font-weight:bold;color:#fff;transform:scaleX(1.0312);">設定</div>
<div class="t" style="left:193.00px;top:378.90px;font-size:8.30px;font-weight:normal;color:#000;-webkit-text-stroke:0.15px currentColor;">port1.5</div>
<div class="t" style="left:261.60px;top:378.90px;font-size:8.30px;font-weight:normal;color:#000;-webkit-text-stroke:0.15px currentColor;">-</div>
<div class="t" style="left:298.60px;top:378.90px;font-size:8.30px;font-weight:normal;color:#000;-webkit-text-stroke:0.15px currentColor;">-</div>
<div class="t" style="left:364.60px;top:378.90px;font-size:8.30px;font-weight:normal;color:#000;-webkit-text-stroke:0.15px currentColor;">-</div>
<div class="t" style="left:429.60px;top:378.90px;font-size:8.30px;font-weight:normal;color:#000;-webkit-text-stroke:0.15px currentColor;">-</div>
<div class="t" style="left:471.60px;top:378.90px;font-size:8.30px;font-weight:normal;color:#000;-webkit-text-stroke:0.15px currentColor;">-</div>
<div class="t" style="left:543.60px;top:378.90px;font-size:8.30px;font-weight:normal;color:#000;-webkit-text-stroke:0.15px currentColor;">-</div>
<div class="t" style="left:623.50px;top:379.50px;font-size:8.00px;font-weight:bold;color:#fff;transform:scaleX(1.0312);">設定</div>
<div class="t" style="left:193.00px;top:395.90px;font-size:8.30px;font-weight:normal;color:#000;-webkit-text-stroke:0.15px currentColor;">port1.6</div>
<div class="t" style="left:261.60px;top:395.90px;font-size:8.30px;font-weight:normal;color:#000;-webkit-text-stroke:0.15px currentColor;">-</div>
<div class="t" style="left:298.60px;top:395.90px;font-size:8.30px;font-weight:normal;color:#000;-webkit-text-stroke:0.15px currentColor;">-</div>
<div class="t" style="left:364.60px;top:395.90px;font-size:8.30px;font-weight:normal;color:#000;-webkit-text-stroke:0.15px currentColor;">-</div>
<div class="t" style="left:429.60px;top:395.90px;font-size:8.30px;font-weight:normal;color:#000;-webkit-text-stroke:0.15px currentColor;">-</div>
<div class="t" style="left:471.60px;top:395.90px;font-size:8.30px;font-weight:normal;color:#000;-webkit-text-stroke:0.15px currentColor;">-</div>
<div class="t" style="left:543.60px;top:395.90px;font-size:8.30px;font-weight:normal;color:#000;-webkit-text-stroke:0.15px currentColor;">-</div>
<div class="t" style="left:623.50px;top:396.50px;font-size:8.00px;font-weight:bold;color:#fff;transform:scaleX(1.0312);">設定</div>
<div class="t" style="left:193.00px;top:412.90px;font-size:8.30px;font-weight:normal;color:#000;-webkit-text-stroke:0.15px currentColor;">port1.7</div>
<div class="t" style="left:261.60px;top:412.90px;font-size:8.30px;font-weight:normal;color:#000;-webkit-text-stroke:0.15px currentColor;">-</div>
<div class="t" style="left:298.60px;top:412.90px;font-size:8.30px;font-weight:normal;color:#000;-webkit-text-stroke:0.15px currentColor;">-</div>
<div class="t" style="left:364.60px;top:412.90px;font-size:8.30px;font-weight:normal;color:#000;-webkit-text-stroke:0.15px currentColor;">-</div>
<div class="t" style="left:429.60px;top:412.90px;font-size:8.30px;font-weight:normal;color:#000;-webkit-text-stroke:0.15px currentColor;">-</div>
<div class="t" style="left:471.60px;top:412.90px;font-size:8.30px;font-weight:normal;color:#000;-webkit-text-stroke:0.15px currentColor;">-</div>
<div class="t" style="left:543.60px;top:412.90px;font-size:8.30px;font-weight:normal;color:#000;-webkit-text-stroke:0.15px currentColor;">-</div>
<div class="t" style="left:623.50px;top:413.50px;font-size:8.00px;font-weight:bold;color:#fff;transform:scaleX(1.0312);">設定</div>
<div class="t" style="left:193.00px;top:429.90px;font-size:8.30px;font-weight:normal;color:#000;-webkit-text-stroke:0.15px currentColor;">port1.8</div>
<div class="t" style="left:261.60px;top:429.90px;font-size:8.30px;font-weight:normal;color:#000;-webkit-text-stroke:0.15px currentColor;">-</div>
<div class="t" style="left:298.60px;top:429.90px;font-size:8.30px;font-weight:normal;color:#000;-webkit-text-stroke:0.15px currentColor;">-</div>
<div class="t" style="left:364.60px;top:429.90px;font-size:8.30px;font-weight:normal;color:#000;-webkit-text-stroke:0.15px currentColor;">-</div>
<div class="t" style="left:429.60px;top:429.90px;font-size:8.30px;font-weight:normal;color:#000;-webkit-text-stroke:0.15px currentColor;">-</div>
<div class="t" style="left:471.60px;top:429.90px;font-size:8.30px;font-weight:normal;color:#000;-webkit-text-stroke:0.15px currentColor;">-</div>
<div class="t" style="left:543.60px;top:429.90px;font-size:8.30px;font-weight:normal;color:#000;-webkit-text-stroke:0.15px currentColor;">-</div>
<div class="t" style="left:623.50px;top:430.50px;font-size:8.00px;font-weight:bold;color:#fff;transform:scaleX(1.0312);">設定</div>
<div class="t" style="left:193.00px;top:446.90px;font-size:8.30px;font-weight:normal;color:#000;-webkit-text-stroke:0.15px currentColor;">port1.9</div>
<div class="t" style="left:261.60px;top:446.90px;font-size:8.30px;font-weight:normal;color:#000;-webkit-text-stroke:0.15px currentColor;">-</div>
<div class="t" style="left:298.60px;top:446.90px;font-size:8.30px;font-weight:normal;color:#000;-webkit-text-stroke:0.15px currentColor;">-</div>
<div class="t" style="left:364.60px;top:446.90px;font-size:8.30px;font-weight:normal;color:#000;-webkit-text-stroke:0.15px currentColor;">-</div>
<div class="t" style="left:429.60px;top:446.90px;font-size:8.30px;font-weight:normal;color:#000;-webkit-text-stroke:0.15px currentColor;">-</div>
<div class="t" style="left:471.60px;top:446.90px;font-size:8.30px;font-weight:normal;color:#000;-webkit-text-stroke:0.15px currentColor;">-</div>
<div class="t" style="left:543.60px;top:446.90px;font-size:8.30px;font-weight:normal;color:#000;-webkit-text-stroke:0.15px currentColor;">-</div>
<div class="t" style="left:623.50px;top:447.50px;font-size:8.00px;font-weight:bold;color:#fff;transform:scaleX(1.0312);">設定</div>
<div class="t" style="left:193.00px;top:463.90px;font-size:8.30px;font-weight:normal;color:#000;-webkit-text-stroke:0.15px currentColor;">port1.10</div>
<div class="t" style="left:261.60px;top:463.90px;font-size:8.30px;font-weight:normal;color:#000;-webkit-text-stroke:0.15px currentColor;">-</div>
<div class="t" style="left:298.60px;top:463.90px;font-size:8.30px;font-weight:normal;color:#000;-webkit-text-stroke:0.15px currentColor;">-</div>
<div class="t" style="left:364.60px;top:463.90px;font-size:8.30px;font-weight:normal;color:#000;-webkit-text-stroke:0.15px currentColor;">-</div>
<div class="t" style="left:429.60px;top:463.90px;font-size:8.30px;font-weight:normal;color:#000;-webkit-text-stroke:0.15px currentColor;">-</div>
<div class="t" style="left:471.60px;top:463.90px;font-size:8.30px;font-weight:normal;color:#000;-webkit-text-stroke:0.15px currentColor;">-</div>
<div class="t" style="left:543.60px;top:463.90px;font-size:8.30px;font-weight:normal;color:#000;-webkit-text-stroke:0.15px currentColor;">-</div>
<div class="t" style="left:623.50px;top:464.50px;font-size:8.00px;font-weight:bold;color:#fff;transform:scaleX(1.0312);">設定</div>
<div class="t" style="left:184.50px;top:520.55px;font-size:10.00px;font-weight:bold;color:#fff;transform:scaleX(1.0036);-webkit-text-stroke:0.3px currentColor;">VLAN インターフェースの一覧</div>
<div class="t" style="left:176.50px;top:553.80px;font-size:7.00px;font-weight:normal;color:#333;transform:scaleX(0.9062);-webkit-text-stroke:0.15px currentColor;">初期設定に戻す</div>
<div class="t" style="left:233.00px;top:553.80px;font-size:7.00px;font-weight:normal;color:#333;transform:scaleX(0.8786);-webkit-text-stroke:0.15px currentColor;">一括設定</div>
<div class="t" style="left:192.56px;top:583.70px;font-size:10.00px;font-weight:bold;color:#fff;transform:scaleX(0.9364);">I/F</div>
<div class="t" style="left:251.65px;top:572.45px;font-size:10.00px;font-weight:normal;color:#fff;transform:scaleX(0.9523);-webkit-text-stroke:0.2px currentColor;">アクセスリスト (IN)</div>
<div class="t" style="left:421.84px;top:572.45px;font-size:10.00px;font-weight:normal;color:#fff;transform:scaleX(0.9616);-webkit-text-stroke:0.2px currentColor;">アクセスリスト (OUT)</div>
<div class="t" style="left:251.62px;top:595.70px;font-size:10.00px;font-weight:normal;color:#fff;transform:scaleX(0.9778);-webkit-text-stroke:0.2px currentColor;">ID</div>
<div class="t" style="left:286.40px;top:595.05px;font-size:9.80px;font-weight:normal;color:#fff;transform:scaleX(0.9550);-webkit-text-stroke:0.2px currentColor;">種類</div>
<div class="t" style="left:345.10px;top:595.55px;font-size:9.80px;font-weight:normal;color:#fff;transform:scaleX(0.9526);-webkit-text-stroke:0.2px currentColor;">説明</div>
<div class="t" style="left:422.62px;top:595.70px;font-size:10.00px;font-weight:normal;color:#fff;transform:scaleX(0.9778);-webkit-text-stroke:0.2px currentColor;">ID</div>
<div class="t" style="left:467.40px;top:595.05px;font-size:9.80px;font-weight:normal;color:#fff;transform:scaleX(0.9550);-webkit-text-stroke:0.2px currentColor;">種類</div>
<div class="t" style="left:542.10px;top:595.55px;font-size:9.80px;font-weight:normal;color:#fff;transform:scaleX(0.9526);-webkit-text-stroke:0.2px currentColor;">説明</div>
<div class="t" style="left:193.00px;top:615.90px;font-size:8.30px;font-weight:normal;color:#000;-webkit-text-stroke:0.15px currentColor;">vlan1</div>
<div class="t" style="left:252.60px;top:615.90px;font-size:8.30px;font-weight:normal;color:#000;-webkit-text-stroke:0.15px currentColor;">-</div>
<div class="t" style="left:286.60px;top:615.90px;font-size:8.30px;font-weight:normal;color:#000;-webkit-text-stroke:0.15px currentColor;">-</div>
<div class="t" style="left:345.60px;top:615.90px;font-size:8.30px;font-weight:normal;color:#000;-webkit-text-stroke:0.15px currentColor;">-</div>
<div class="t" style="left:423.60px;top:615.90px;font-size:8.30px;font-weight:normal;color:#000;-webkit-text-stroke:0.15px currentColor;">-</div>
<div class="t" style="left:467.60px;top:615.90px;font-size:8.30px;font-weight:normal;color:#000;-webkit-text-stroke:0.15px currentColor;">-</div>
<div class="t" style="left:542.60px;top:615.90px;font-size:8.30px;font-weight:normal;color:#000;-webkit-text-stroke:0.15px currentColor;">-</div>
<div class="t" style="left:623.50px;top:616.50px;font-size:8.00px;font-weight:bold;color:#fff;transform:scaleX(1.0312);">設定</div>
<div class="t" style="left:193.00px;top:632.90px;font-size:8.30px;font-weight:normal;color:#000;-webkit-text-stroke:0.15px currentColor;">vlan11</div>
<div class="t" style="left:252.60px;top:632.90px;font-size:8.30px;font-weight:normal;color:#000;-webkit-text-stroke:0.15px currentColor;">1</div>
<div class="t" style="left:285.60px;top:632.90px;font-size:8.30px;font-weight:normal;color:#000;-webkit-text-stroke:0.15px currentColor;">IPv4</div>
<div class="t" style="left:345.60px;top:632.90px;font-size:8.30px;font-weight:normal;color:#000;-webkit-text-stroke:0.15px currentColor;">vlan11</div>
<div class="t" style="left:423.60px;top:632.90px;font-size:8.30px;font-weight:normal;color:#000;-webkit-text-stroke:0.15px currentColor;">-</div>
<div class="t" style="left:467.60px;top:632.90px;font-size:8.30px;font-weight:normal;color:#000;-webkit-text-stroke:0.15px currentColor;">-</div>
<div class="t" style="left:542.60px;top:632.90px;font-size:8.30px;font-weight:normal;color:#000;-webkit-text-stroke:0.15px currentColor;">-</div>
<div class="t" style="left:623.50px;top:633.50px;font-size:8.00px;font-weight:bold;color:#fff;transform:scaleX(1.0312);">設定</div>
<div class="t" style="left:193.00px;top:649.90px;font-size:8.30px;font-weight:normal;color:#000;-webkit-text-stroke:0.15px currentColor;">vlan12</div>
<div class="t" style="left:252.60px;top:649.90px;font-size:8.30px;font-weight:normal;color:#000;-webkit-text-stroke:0.15px currentColor;">-</div>
<div class="t" style="left:286.60px;top:649.90px;font-size:8.30px;font-weight:normal;color:#000;-webkit-text-stroke:0.15px currentColor;">-</div>
<div class="t" style="left:345.60px;top:649.90px;font-size:8.30px;font-weight:normal;color:#000;-webkit-text-stroke:0.15px currentColor;">-</div>
<div class="t" style="left:423.60px;top:649.90px;font-size:8.30px;font-weight:normal;color:#000;-webkit-text-stroke:0.15px currentColor;">-</div>
<div class="t" style="left:467.60px;top:649.90px;font-size:8.30px;font-weight:normal;color:#000;-webkit-text-stroke:0.15px currentColor;">-</div>
<div class="t" style="left:542.60px;top:649.90px;font-size:8.30px;font-weight:normal;color:#000;-webkit-text-stroke:0.15px currentColor;">-</div>
<div class="t" style="left:623.50px;top:650.50px;font-size:8.00px;font-weight:bold;color:#fff;transform:scaleX(1.0312);">設定</div>
<div class="t" style="left:193.00px;top:666.90px;font-size:8.30px;font-weight:normal;color:#000;-webkit-text-stroke:0.15px currentColor;">vlan13</div>
<div class="t" style="left:252.60px;top:666.90px;font-size:8.30px;font-weight:normal;color:#000;-webkit-text-stroke:0.15px currentColor;">-</div>
<div class="t" style="left:286.60px;top:666.90px;font-size:8.30px;font-weight:normal;color:#000;-webkit-text-stroke:0.15px currentColor;">-</div>
<div class="t" style="left:345.60px;top:666.90px;font-size:8.30px;font-weight:normal;color:#000;-webkit-text-stroke:0.15px currentColor;">-</div>
<div class="t" style="left:423.60px;top:666.90px;font-size:8.30px;font-weight:normal;color:#000;-webkit-text-stroke:0.15px currentColor;">-</div>
<div class="t" style="left:467.60px;top:666.90px;font-size:8.30px;font-weight:normal;color:#000;-webkit-text-stroke:0.15px currentColor;">-</div>
<div class="t" style="left:542.60px;top:666.90px;font-size:8.30px;font-weight:normal;color:#000;-webkit-text-stroke:0.15px currentColor;">-</div>
<div class="t" style="left:623.50px;top:667.50px;font-size:8.00px;font-weight:bold;color:#fff;transform:scaleX(1.0312);">設定</div>
<div class="t" style="left:594.55px;top:545.85px;font-size:10.00px;font-weight:normal;color:#222;transform:scaleX(0.9500);-webkit-text-stroke:0.15px currentColor;">1</div>
<div class="t" style="left:610.00px;top:545.85px;font-size:10.00px;font-weight:normal;color:#222;transform:scaleX(1.1182);-webkit-text-stroke:0.15px currentColor;">/ 1</div>
<div class="a " style="left:611px;top:641px;width:41px;height:24px;border:3px solid #e8000b"></div>
<div class="a " style="left:0px;top:0px;width:1px;height:712px;background:#4a4a4a"></div>
<div class="a " style="left:679px;top:0px;width:1px;height:712px;background:#555"></div>
<div class="a " style="left:678px;top:52px;width:1px;height:660px;background:#fff"></div>
<div class="a " style="left:678px;top:24px;width:1px;height:28px;background:#c4c4c4"></div>
<div class="a " style="left:0px;top:711px;width:680px;height:1px;background:#444"></div>
<div class="a " style="left:1px;top:710px;width:678px;height:1px;background:#fff"></div>
<div class="a " style="left:1px;top:52px;width:2px;height:660px;background:#fff"></div></body></html>
